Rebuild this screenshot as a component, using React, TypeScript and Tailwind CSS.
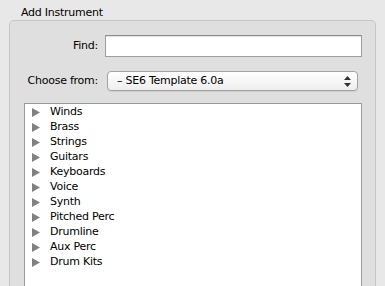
import React from 'react';

const instruments = [
  'Winds',
  'Brass',
  'Strings',
  'Guitars',
  'Keyboards',
  'Voice',
  'Synth',
  'Pitched Perc',
  'Drumline',
  'Aux Perc',
  'Drum Kits',
];

const Disclosure: React.FC = () => (
  <svg width="8" height="9" viewBox="0 0 8 9" className="shrink-0">
    <polygon points="0,0 8,4.5 0,9" fill="#808080" />
  </svg>
);

const App: React.FC = () => {
  return (
    <div className="w-[385px] h-[286px] overflow-hidden bg-[#e8e8e8] font-['DejaVu_Sans',sans-serif] text-[11px] tracking-[-0.25px] text-black flex flex-col">
      {/* Title */}
      <div className="pl-[21px] pt-[6px] h-[20px] leading-[13px]">Add Instrument</div>

      {/* Group box */}
      <div className="ml-[9px] mr-[9px] flex-1 rounded-t-[5px] border border-b-0 border-[#c6c6c6] bg-[#dfdfdf] pt-[14px] flex flex-col">
        {/* Find */}
        <div className="flex items-center h-[22px]">
          <label className="w-[88px] text-right">Find:</label>
          <input
            className="ml-[7px] w-[257px] h-[22px] bg-white border border-[#9e9e9e] border-t-[#8c8c8c] shadow-[inset_0_1px_1px_rgba(0,0,0,0.12)] outline-none"
            readOnly
          />
        </div>

        {/* Choose from */}
        <div className="flex items-center h-[20px] mt-[14px]">
          <label className="w-[88px] text-right">Choose from:</label>
          <div className="ml-[9px] w-[251px] h-[20px] rounded-[4px] border border-[#a3a3a3] bg-gradient-to-b from-white to-[#eeeeee] shadow-[0_1px_1px_rgba(0,0,0,0.08)] flex items-center pl-[9px] pr-[6px]">
            <span className="flex-1">– SE6 Template 6.0a</span>
            <svg width="7" height="11" viewBox="0 0 7 11">
              <polygon points="3.5,0 7,4 0,4" fill="#333" />
              <polygon points="0,7 7,7 3.5,11" fill="#333" />
            </svg>
          </div>
        </div>

        {/* Instrument list */}
        <div className="ml-[14px] mr-[13px] mt-[12px] flex-1 bg-white border border-b-0 border-[#9a9a9a] pl-[7px] pt-[1px] flex flex-col">
          {instruments.map(name => (
            <div key={name} className="h-[15px] flex items-center">
              <Disclosure />
              <span className="ml-[10px]">{name}</span>
            </div>
          ))}
        </div>
      </div>
    </div>
  );
};

export default App;
